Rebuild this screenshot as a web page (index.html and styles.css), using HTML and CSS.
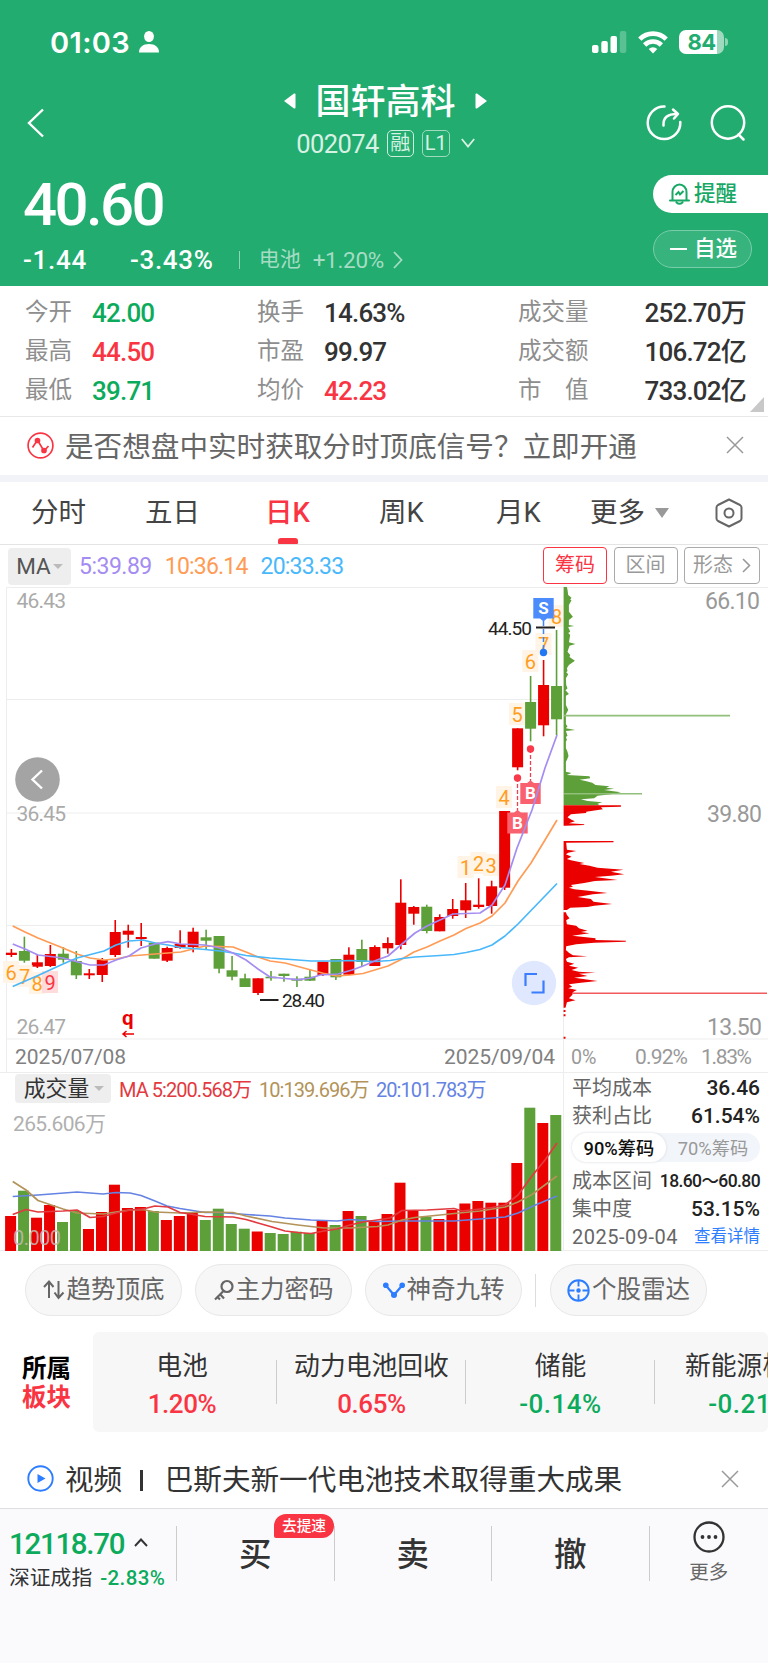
FILE: index.html
```html
<!DOCTYPE html>
<html lang="zh-CN">
<head>
  <meta charset="UTF-8">
  <meta name="viewport" content="width=device-width, initial-scale=1.0">
  <title>国轩高科 002074</title>
  <link rel="stylesheet" href="styles.css">
</head>
<body>
  <header class="header">
    <div class="status-bar">
      <span class="clock">01:03</span>
      <svg class="person" width="20" height="22" viewBox="0 0 20 22" fill="#fff"><ellipse cx="10" cy="5.5" rx="4.9" ry="5.5"/><path d="M0 21.5C0 16 4 13 10 13s10 3 10 8.500z"/></svg>
      <div class="status-icons">
        <svg width="35" height="23" viewBox="0 0 35 23" fill="#fff"><rect x="0" y="14" width="6.500" height="8" rx="2"/><rect x="9.300" y="10" width="6.500" height="12" rx="2"/><rect x="18.500" y="5" width="6.500" height="17" rx="2"/><rect x="27.800" y="0" width="6.500" height="22" rx="2" opacity=".25"/></svg>
        <svg width="30" height="23" viewBox="0 0 30 23" fill="none" stroke="#fff" stroke-width="4.600"><path d="M1.800 8.200a18.500 18.500 0 0 1 26.400 0"/><path d="M6.600 14a12 12 0 0 1 16.800 0"/><path d="M15 22.500l-4.300-4.600a6.300 6.300 0 0 1 8.600 0z" fill="#fff" stroke="none"/></svg>
        <div class="battery"><span>84</span></div>
      </div>
    </div>

    <div class="nav">
      <svg class="back" width="18" height="30" viewBox="0 0 18 30" fill="none" stroke="#fff" stroke-width="2.400"><path d="M16 1.500L2 15l14 13.500"/></svg>
      <div class="nav-title">
        <div class="stock-name">
          <svg width="12" height="16" viewBox="0 0 12 16" fill="#fff"><path d="M0 8L10 .6q1.500-.6 1.500 1v12.800q0 1.600-1.500 1z"/></svg>
          <h1>国轩高科</h1>
          <svg width="12" height="16" viewBox="0 0 12 16" fill="#fff"><path d="M12 8L2 .6Q.5 0 .5 1.600v12.800q0 1.600 1.500 1z"/></svg>
        </div>
        <div class="stock-code">
          <span class="code">002074</span>
          <span class="tag">融</span>
          <span class="tag tag-l1">L1</span>
          <svg width="14" height="10" viewBox="0 0 14 10" fill="none" stroke="#d8f1e5" stroke-width="1.800"><path d="M.8 1L7 8.500 13.200 1"/></svg>
        </div>
      </div>
      <div class="nav-actions">
        <svg width="36" height="36" viewBox="0 0 36 36" fill="none" stroke="#fff" stroke-width="2.500" stroke-linecap="round"><path d="M18.500 1.500A16.300 16.300 0 1 0 34.300 17"/><path d="M17.500 20.500c-.5-8 4-11.500 13.500-11.500"/><path d="M27 4.500l5 4.500-4 4.500" stroke-linejoin="round"/></svg>
        <svg width="36" height="37" viewBox="0 0 36 37" fill="none" stroke="#fff" stroke-width="2.500" stroke-linecap="round"><circle cx="18" cy="17.500" r="16.200"/><path d="M28.500 29.500l5 5"/></svg>
      </div>
    </div>

    <div class="quote">
      <div class="quote-left">
        <div class="price">40.60</div>
        <div class="change">
          <span class="diff">-1.44</span>
          <span class="percent">-3.43%</span>
          <i class="split"></i>
          <span class="sector-name">电池</span>
          <span class="sector-rate">+1.20%</span>
          <svg width="10" height="18" viewBox="0 0 10 18" fill="none" stroke="#a5dcc4" stroke-width="1.800"><path d="M1 1l7.500 8L1 17"/></svg>
        </div>
      </div>
      <div class="quote-right">
        <a class="pill pill-remind">
          <svg width="21" height="22" viewBox="0 0 21 22" fill="none" stroke="#18a866" stroke-width="2"><path d="M3.500 17V9a7 7.500 0 0 1 14 0v8M1 17.500h19M7.500 19.500q3 2.500 6 0" stroke-linecap="round"/><path d="M6.500 12l3-3 1.500 2.500 3.500-3.500"/></svg>
          <span>提醒</span>
        </a>
        <a class="pill pill-fav"><i class="minus"></i><span>自选</span></a>
      </div>
    </div>
  </header>

  <section class="stats">
    <span class="label">今开</span><b class="green">42.00</b>
    <span class="label">换手</span><b>14.63%</b>
    <span class="label">成交量</span><b class="right">252.70万</b>
    <span class="label">最高</span><b class="red">44.50</b>
    <span class="label">市盈</span><b>99.97</b>
    <span class="label">成交额</span><b class="right">106.72亿</b>
    <span class="label">最低</span><b class="green">39.71</b>
    <span class="label">均价</span><b class="red">42.23</b>
    <span class="label">市　值</span><b class="right">733.02亿</b>
    <i class="corner"></i>
  </section>

  <section class="notice">
    <svg width="27" height="27" viewBox="0 0 27 27" fill="none" stroke="#fa3543" stroke-width="1.700"><circle cx="13.500" cy="13.500" r="12.400"/><path d="M5.500 15.500L10.500 8l6.500 11 4.500-5"/><circle cx="10.500" cy="8.500" r="2" fill="#fa3543"/><circle cx="17" cy="18.500" r="2" fill="#fa3543"/></svg>
    <span>是否想盘中实时获取分时顶底信号？立即开通</span>
    <svg class="close" width="18" height="18" viewBox="0 0 18 18" stroke="#999" stroke-width="1.500"><path d="M1 1l16 16M17 1L1 17"/></svg>
  </section>

  <nav class="tabs">
    <a>分时</a>
    <a>五日</a>
    <a class="active">日K</a>
    <a>周K</a>
    <a>月K</a>
    <a class="more">更多<i class="arrow"></i></a>
    <svg width="28" height="30" viewBox="0 0 28 30" fill="none" stroke="#666" stroke-width="2"><path d="M14 1.500L25 7q1.500 1 1.500 2.500v11q0 1.500-1.500 2.500L14 28.500 3 23q-1.500-1-1.500-2.500v-11Q1.500 8 3 7z" stroke-linejoin="round"/><circle cx="14" cy="15" r="4.500"/></svg>
  </nav>

  <div class="ma-row">
    <span class="select">MA<i class="arrow"></i></span>
    <span class="ma purple">5:39.89</span>
    <span class="ma orange">10:36.14</span>
    <span class="ma blue">20:33.33</span>
    <div class="tools">
      <a class="tool on">筹码</a>
      <a class="tool">区间</a>
      <a class="tool tool-wide">形态<svg width="9" height="15" viewBox="0 0 9 15" fill="none" stroke="#999" stroke-width="1.600"><path d="M1 1l6.500 6.500L1 14"/></svg></a>
    </div>
  </div>

  <svg class="k-chart" id="kChart" width="768" height="485" viewBox="0 587 768 485">
    <g class="grid">
      <path d="M6.500 1072V587.500H768M6.500 699.500H563M6.500 813H563M6.500 925.500H563M6.500 1039H768M563.500 1039V1072M563.500 890V1039"/>
    </g>
    <g id="chips"></g>
    <g id="candles"></g>
    <g id="marks"></g>
    <g id="kLines" class="lines"></g>
    <g class="axis">
      <text x="16.500" y="608" textLength="49.500">46.43</text>
      <text x="16.500" y="821" textLength="49.500">36.45</text>
      <text x="16.500" y="1034" textLength="49.500">26.47</text>
    </g>
    <g class="axis axis-right">
      <text x="705" y="609" textLength="55">66.10</text>
      <text x="707" y="822" textLength="55">39.80</text>
      <text x="707" y="1035" textLength="55">13.50</text>
    </g>
    <g class="axis axis-date">
      <text x="15" y="1064" textLength="111">2025/07/08</text>
      <text x="444" y="1064" textLength="111">2025/09/04</text>
    </g>
    <g class="axis axis-percent">
      <text x="571" y="1064" textLength="25.500" lengthAdjust="spacingAndGlyphs">0%</text>
      <text x="635" y="1064" textLength="53">0.92%</text>
      <text x="701" y="1064" textLength="51">1.83%</text>
    </g>
    <g class="extreme">
      <text x="488" y="634.500" textLength="44">44.50</text>
      <path d="M536 627.500h19M260 1000h18.500"/>
      <text x="282" y="1007" textLength="43">28.40</text>
    </g>
    <text class="dividend" x="122" y="1025">q</text>
    <path class="dividend-arrow" d="M134 1034h-11M126.500 1031l-3.500 3 3.500 3"/>
    <circle cx="37.500" cy="779.500" r="22.300" fill="#a4a4a4"/>
    <path d="M42 770.500l-9.500 9 9.500 9" fill="none" stroke="#fff" stroke-width="2.400"/>
    <circle cx="534" cy="983" r="22.200" fill="#dfe8fe"/>
    <path d="M525.500 986v-12H537M543.500 980.500v12H531.500" fill="none" stroke="#3a7dff" stroke-width="2.200"/>
  </svg>

  <section class="volume">
    <div class="volume-left">
      <div class="volume-head">
        <span class="select select-vol">成交量<i class="arrow"></i></span>
        <span class="vma vma-red">MA 5:200.568万</span>
        <span class="vma vma-brown">10:139.696万</span>
        <span class="vma vma-blue">20:101.783万</span>
      </div>
      <svg class="v-chart" width="563" height="145" viewBox="0 1106 563 145">
        <g id="volumes"></g>
        <g id="vLines" class="lines"></g>
        <text class="axis-vol" x="13" y="1131" textLength="93">265.606万</text>
        <text class="axis-zero" x="13" y="1244.500" textLength="48">0.000</text>
      </svg>
    </div>
    <div class="volume-right">
      <div class="row"><span>平均成本</span><b>36.46</b></div>
      <div class="row"><span>获利占比</span><b>61.54%</b></div>
      <div class="toggle"><a class="on">90%筹码</a><a>70%筹码</a></div>
      <div class="row row-small"><span>成本区间</span><b>18.60～60.80</b></div>
      <div class="row"><span>集中度</span><b>53.15%</b></div>
      <div class="row row-date"><span>2025-09-04</span><a>查看详情</a></div>
    </div>
  </section>

  <section class="features">
    <a>
      <svg width="22" height="22" viewBox="0 0 22 22" fill="none" stroke="#666" stroke-width="2"><path d="M6 19V3M1 8l5-5.500L10.500 8M15.500 2v17M11.500 13.500l4 5.500 5-5.500"/></svg>
      趋势顶底
    </a>
    <a>
      <svg width="20" height="22" viewBox="0 0 20 22" fill="none" stroke="#666" stroke-width="2.200"><circle cx="13" cy="7.500" r="5.500"/><path d="M9.500 12L1 20.500M5.500 14.500l4.500 5M3 17.500l3 3"/></svg>
      主力密码
    </a>
    <a>
      <svg width="22" height="22" viewBox="0 0 22 22" fill="none" stroke="#2c7dff" stroke-width="2.200"><path d="M2.500 6L11 16l8.500-10"/><g fill="#2c7dff" stroke="none"><circle cx="2.800" cy="6.300" r="2.800"/><circle cx="19.200" cy="6.300" r="2.800"/><circle cx="11" cy="16" r="3"/></g></svg>
      神奇九转
    </a>
    <i class="bar"></i>
    <a>
      <svg width="23" height="23" viewBox="0 0 23 23" fill="none" stroke="#2c7dff" stroke-width="1.900"><circle cx="11.500" cy="11.500" r="10.200"/><path d="M11.500 1v6.500M11.500 15.500V22M1 11.500h6.500M15.500 11.500H22"/><circle cx="11.500" cy="11.500" r="1.300" fill="#2c7dff"/></svg>
      个股雷达
    </a>
  </section>

  <section class="sectors">
    <div class="sectors-title"><span>所属</span><span class="red">板块</span></div>
    <div class="sectors-list">
      <div class="sector"><span>电池</span><b class="red">1.20%</b></div>
      <div class="sector"><span>动力电池回收</span><b class="red">0.65%</b></div>
      <div class="sector"><span>储能</span><b class="green">-0.14%</b></div>
      <div class="sector"><span>新能源板块</span><b class="green">-0.21%</b></div>
    </div>
  </section>

  <section class="video">
    <svg width="27" height="27" viewBox="0 0 27 27" fill="none" stroke="#2c7dff" stroke-width="1.900"><circle cx="13.500" cy="13.500" r="12.200"/><path d="M10.500 9v9l8-4.500z" fill="#2c7dff" stroke="none"/></svg>
    <span>视频</span>
    <i class="video-bar"></i>
    <span>巴斯夫新一代电池技术取得重大成果</span>
    <svg class="close" width="18" height="18" viewBox="0 0 18 18" stroke="#999" stroke-width="1.500"><path d="M1 1l16 16M17 1L1 17"/></svg>
  </section>

  <footer class="footer">
    <div class="index">
      <div class="index-value">12118.70<svg width="14" height="9" viewBox="0 0 14 9" fill="none" stroke="#333" stroke-width="1.900"><path d="M1 8l6-6.500L13 8"/></svg></div>
      <div class="index-name">深证成指<span>-2.83%</span></div>
    </div>
    <a class="trade">买<em>去提速</em></a>
    <a class="trade">卖</a>
    <a class="trade">撤</a>
    <a class="footer-more">
      <svg width="32" height="32" viewBox="0 0 32 32" fill="none" stroke="#333" stroke-width="2.300"><circle cx="16" cy="16" r="14.500"/><g fill="#333" stroke="none"><circle cx="9.500" cy="16" r="1.900"/><circle cx="16" cy="16" r="1.900"/><circle cx="22.500" cy="16" r="1.900"/></g></svg>
      <span>更多</span>
    </a>
  </footer>

  <script src="script.js"></script>
</body>
</html>
```

FILE: styles.css
```css
* { box-sizing: border-box; margin: 0; padding: 0; }
body { width: 768px; height: 1663px; overflow: hidden; background: #fff; color: #333; font-family: Roboto, "Noto Sans CJK SC", sans-serif; }
svg { display: block; flex: none; }
i, em { font-style: normal; display: block; }
b { font-weight: 500; }
.red { color: #fa3543 !important; }
.green { color: #0cab5c !important; }
.arrow { width: 0; height: 0; border-left: 5px solid transparent; border-right: 5px solid transparent; border-top: 5px solid #999; }

/* header */
.header { height: 286px; background: #22ac6f; color: #fff; }
.status-bar { height: 84px; padding: 0 44px 0 50px; display: flex; align-items: center; }
.clock { font-family: Inter, sans-serif; font-weight: 600; font-size: 29px; letter-spacing: .4px; line-height: 1; }
.person { margin-left: 9px; }
.status-icons { margin-left: auto; display: flex; align-items: center; gap: 11px; }
.battery { position: relative; width: 45px; height: 24px; border-radius: 7px; background: linear-gradient(90deg, #fff 84%, #9fdabf 84%); color: #22ac6f; font: 700 22px/24px Inter, sans-serif; letter-spacing: -.5px; text-align: center; }
.battery::after { content: ""; position: absolute; left: 46px; top: 8px; width: 3px; height: 8px; border-radius: 0 3px 3px 0; background: #8dd3b4; }
.nav { height: 76px; padding: 0 22px 0 27px; display: grid; grid-template-columns: 96px 1fr 98px; }
.back { margin-top: 24px; }
.nav-title { display: flex; flex-direction: column; align-items: center; }
.stock-name { display: flex; align-items: center; gap: 19px; height: 34px; }
.stock-name h1 { padding-top: 3px; font-size: 35px; font-weight: 500; line-height: 34px; }
.stock-code { display: flex; align-items: center; gap: 8px; height: 28px; margin-top: 11px; color: #d8f1e5; }
.code { padding-top: 2px; font-size: 25.500px; letter-spacing: -.6px; }
.tag { width: 27px; height: 27px; border: 1.500px solid #d0eee0; border-radius: 5px; font-size: 20px; line-height: 24px; text-align: center; }
.tag-l1 { width: 28px; font-size: 20px; border-color: #9fdabf; }
.stock-code svg { margin-left: 3px; }
.nav-actions { display: flex; gap: 28px; margin-top: 21px; justify-content: flex-end; }
.quote { display: flex; justify-content: space-between; padding-left: 23px; }
.price { margin-top: 15px; font-size: 60px; font-weight: 500; line-height: 60px; letter-spacing: -2.600px; }
.change { display: flex; align-items: center; height: 28px; margin-top: 11px; font-size: 26px; letter-spacing: -.3px; }
.diff, .percent { font-weight: 500; letter-spacing: .7px; }
.percent { margin-left: 43px; }
.split { width: 1px; height: 18px; margin-left: 25px; background: #90d5b7; }
.sector-name { margin-left: 19px; font-size: 21px; line-height: 26px; padding-bottom: 2px; color: #a5dcc4; letter-spacing: 0; }
.sector-rate { margin: 0 9px 0 12px; font-size: 22.500px; color: #a5dcc4; }
.quote-right { width: 115px; padding-top: 15px; }
.pill { display: flex; align-items: center; height: 38px; padding-left: 16px; border-radius: 19px; font-size: 21.500px; font-weight: 500; line-height: 38px; }
.pill-remind { background: #fff; color: #18a866; border-radius: 19px 0 0 19px; gap: 4px; }
.pill-fav { width: 99px; margin-top: 17px; border: 1.500px solid #7accaa; background: #37b47d; gap: 7px; }
.minus { width: 17px; height: 2px; background: #fff; }

/* stats */
.stats { position: relative; height: 131px; padding: 7px 22px 0 25px; display: grid; grid-template-columns: 67px 165px 67px 194px 101px 1fr; grid-auto-rows: 39px; line-height: 39px; border-bottom: 1px solid #e8e8e8; }
.stats .label { font-size: 23.500px; color: #8e8e8e; }
.stats b { font-size: 26px; letter-spacing: -.8px; line-height: 40px; }
.stats .right { text-align: right; white-space: nowrap; }
.corner { position: absolute; right: 4px; bottom: 4px; border-left: 14px solid transparent; border-bottom: 15px solid #c8c8c8; }

.notice { height: 65px; padding: 0 24px 0 27px; display: flex; align-items: center; gap: 11px; font-size: 28.600px; line-height: 58px; color: #666; border-bottom: 7px solid #f2f3f9; }
.notice span { padding-top: 2px; }
.notice svg { margin-top: -2px; }
.close { margin-left: auto; }

/* period tabs */
.tabs { height: 63px; padding: 0 25px 0 31px; display: grid; grid-template-columns: 114px 120px 114px 117px 94px 1fr 28px; align-items: center; border-bottom: 1px solid #e4e4e4; font-size: 27.500px; line-height: 62px; color: #444; }
.tabs a { position: relative; }
.tabs .active { color: #fa3543; font-weight: 500; }
.tabs .active::after { content: ""; position: absolute; left: 13px; bottom: 0; width: 20px; height: 6px; border-radius: 3px 3px 1px 1px; background: #fa3543; }
.more { display: flex; align-items: center; gap: 10px; }
.more .arrow { border-width: 10px 7px 0; }

.ma-row { height: 42px; padding: 0 8px; display: flex; align-items: center; }
.select { display: flex; align-items: center; justify-content: center; gap: 2px; width: 63px; height: 37px; border-radius: 4px; background: #eee; color: #555; font-size: 22.500px; }
.select .arrow { border-top-color: #bbb; }
.ma { font-size: 23px; letter-spacing: -.8px; margin-left: 13px; }
.ma:nth-child(2) { margin-left: 8px; letter-spacing: -.5px; }
.purple { color: #a48cf2; }
.orange { color: #ff9b55; }
.blue { color: #49b8fb; }
.tools { margin: -2px 0 0 auto; display: flex; gap: 6.500px; }
.tool { display: flex; align-items: center; justify-content: center; gap: 9px; width: 64px; height: 37px; border: 1.500px solid #aaa; border-radius: 4px; color: #999; font-size: 20px; line-height: 34px; }
.tool-wide { width: 76px; }
.tool.on { color: #fa3543; border-color: #fa3543; }

/* candles */
.grid path { fill: none; stroke: #ededed; stroke-width: 1; }
.axis { font-size: 21px; fill: #aaa; }
.axis-right { font-size: 23px; fill: #999; }
.axis-date { font-size: 21px; fill: #808080; }
.axis-percent { font-size: 21px; fill: #999; }
.lines path { fill: none; stroke-width: 1.700; stroke-linejoin: round; }
.extreme { font-size: 19px; fill: #222; }
.extreme path { stroke: #222; stroke-width: 2; }
.nine { font-size: 20px; text-anchor: middle; fill: #ff9d1e; }
.nine-end { fill: #fa3543; }
.badge-text { font-size: 17px; font-weight: 700; text-anchor: middle; fill: #fff; }
.dividend { font-size: 20.500px; font-weight: 700; fill: #eb0000; }
.dividend-arrow { fill: none; stroke: #eb0000; stroke-width: 1.500; }

/* volume */
.volume { height: 179px; display: flex; border-top: 1px solid #ededed; border-bottom: 1px solid #ededed; }
.volume-left { width: 563px; }
.volume-head { display: flex; align-items: center; height: 33px; padding-left: 15px; white-space: nowrap; }
.select-vol { width: 96px; height: 29px; gap: 5px; margin: -2px 8px 0 0; padding-left: 2px; color: #333; font-size: 21.800px; line-height: 29px; }
.vma { width: 140px; font-size: 20px; line-height: 38px; letter-spacing: -.95px; }
.vma-brown { width: 117px; }
.vma-red { color: #e23a3f; }
.vma-brown { color: #b39359; }
.vma-blue { width: 110px; color: #6583e2; }
.axis-vol { font-size: 21px; fill: #b0b0b0; }
.axis-zero { font-size: 20px; fill: #c4b9b5; opacity: .85; }
.volume-right { flex: 1; padding: 1px 8px 0 8px; border-left: 1px solid #ededed; }
.row { display: flex; justify-content: space-between; align-items: center; height: 28px; font-size: 20px; line-height: 28px; color: #666; white-space: nowrap; }
.row b { color: #222; font-size: 21px; }
.row-small { margin-top: 5px; }
.row-small b { font-size: 17.500px; letter-spacing: -.6px; }
.toggle { display: flex; height: 29px; margin-top: 3px; border-radius: 15px; background: #f2f5fa; color: #999; font-size: 18.300px; line-height: 31px; text-align: center; }
.toggle a { flex: 1; }
.toggle .on { border-radius: 15px; background: #fff; color: #111; font-weight: 500; box-shadow: 0 0 3px #d4d8de; }
.row-date { font-size: 20px; letter-spacing: .5px; }
.row-date a { font-size: 16.500px; letter-spacing: 0; color: #2c7dff; }

/* feature buttons */
.features { display: flex; gap: 13px; padding: 13px 25px 0; }
.features a { display: flex; align-items: center; justify-content: center; gap: 2px; width: 157px; height: 52px; border: 1px solid #e8e8e8; border-radius: 26px; background: #f7f7f7; color: #666; font-size: 24.500px; line-height: 50px; }
.bar { width: 1px; height: 33px; margin: 10px 1px 0 0; background: #ddd; }

/* sectors */
.sectors { display: flex; height: 100px; margin-top: 16px; }
.sectors-title { width: 93px; padding: 22px 0 0 22px; display: flex; flex-direction: column; font-size: 24.500px; font-weight: 700; line-height: 29px; color: #000; }
.sectors-list { width: 675px; display: flex; border-radius: 6px; background: #f7f7f8; overflow: hidden; }
.sector { position: relative; flex: none; width: 189px; padding-top: 15px; text-align: center; }
.sector:first-child { width: 184px; padding-right: 6px; }
.sector::after { content: ""; position: absolute; right: 0; top: 28px; width: 1px; height: 44px; background: #ccc; }
.sector span, .sector b { display: block; height: 38px; line-height: 38px; font-size: 25.800px; }
.sector b { font-size: 26px; letter-spacing: -.4px; }
.sector .green { letter-spacing: .5px; }

.video { height: 76px; padding: 20px 29px 0 27px; display: flex; align-items: center; font-size: 28.600px; line-height: 52px; }
.video svg { margin-top: -3px; }
.video svg + span { margin-left: 11px; }
.video-bar { width: 2.500px; height: 21px; margin: 0 22px 0 18px; background: #333; }

/* footer */
.footer { height: 155px; padding-right: 0; display: flex; border-top: 1px solid #dddde2; background: #fafafd; }
.index { width: 177px; height: 55px; margin-top: 17px; padding-left: 9px; border-right: 1px solid #ccc; white-space: nowrap; }
.index-value { display: flex; align-items: center; gap: 10px; padding-top: 2px; font-size: 29.500px; line-height: 32px; letter-spacing: -1.300px; font-weight: 500; color: #0cab5c; }
.index-value svg { margin-top: -3px; }
.index-name { margin-top: 4px; font-size: 20.800px; line-height: 28px; }
.index-name span { margin-left: 8px; font-size: 20.500px; letter-spacing: .4px; color: #0cab5c; font-weight: 500; }
.trade { position: relative; width: 157.500px; height: 55px; margin-top: 17px; border-right: 1px solid #ccc; font-size: 32.500px; font-weight: 500; line-height: 58px; text-align: center; }
.trade em { position: absolute; left: 97px; top: -12px; width: 60px; height: 24px; border-radius: 12px 12px 12px 2px; background: #fa3543; color: #fff; font-size: 14.700px; line-height: 24px; }
.footer-more { flex: 1; display: flex; flex-direction: column; align-items: center; padding-top: 12px; font-size: 19.500px; line-height: 36px; color: #666; }
.footer-more span { margin-top: 2px; }
```

FILE: script.js
```js
const RED = '#eb0000';
const GREEN = '#5d9f39';
const NS = 'http://www.w3.org/2000/svg';

function add(parent, tag, attrs, text) {
  const el = document.createElementNS(NS, tag);
  for (const key in attrs) el.setAttribute(key, attrs[key]);
  if (text) el.textContent = text;
  document.getElementById(parent).appendChild(el);
}

// [color, high, body top, body bottom, low]
const candles = [
  ['r', 949, 952.7, 955, 957], ['g', 936.7, 951, 960.7, 962.7], ['r', 954.7, 962.3, 966.7, 968],
  ['r', 945, 954, 966, 967], ['g', 947, 953.7, 959.7, 962.7], ['g', 951, 961, 975.3, 979],
  ['r', 969, 973.3, 975.3, 979], ['r', 958, 960, 975, 982], ['r', 920, 932, 955, 957],
  ['r', 924.7, 930.7, 934.7, 947.7], ['r', 923, 937, 939, 946], ['g', 942, 942.7, 958.7, 958.7],
  ['r', 946.7, 948, 960.7, 962], ['r', 930.3, 944, 948, 948.7], ['r', 927.7, 931.7, 947, 952.3],
  ['g', 929.7, 937.3, 940.7, 949.3], ['g', 936, 936, 968.7, 973.3], ['g', 956, 970.3, 976.7, 980.3],
  ['g', 973.7, 978.3, 987, 987], ['r', 978.3, 978.3, 993, 995], ['g', 971, 976.7, 978.3, 980.7],
  ['g', 973.7, 973.7, 976, 981.7], ['g', 976.3, 978.7, 980.7, 987], ['g', 969, 976.7, 980.7, 981],
  ['r', 961.7, 961.7, 975, 976], ['g', 959, 959, 977.3, 980], ['r', 947.3, 954.7, 974.7, 974.7],
  ['g', 939.7, 949, 962, 966.7], ['r', 945.3, 947, 966, 966], ['r', 937.3, 943, 948.3, 953.7],
  ['r', 879.3, 902.7, 945, 949.3], ['r', 906, 907, 913.7, 924.7], ['g', 904.7, 906.7, 931, 933.3],
  ['r', 914.3, 917, 931.3, 931.3], ['r', 899, 909, 916, 918.7], ['r', 883, 900.3, 910.3, 918],
  ['r', 878.3, 904.7, 907, 908.7], ['r', 880.7, 886.3, 906, 913.7], ['r', 811, 811, 887.7, 890],
  ['r', 728.3, 728.3, 767.3, 770.3], ['g', 676, 702, 728.7, 741.3], ['r', 660, 685, 725.3, 736.3],
  ['g', 630, 686, 719.3, 735]
];
candles.forEach(([c, high, top, bottom, low], i) => {
  const x = 11.4 + i * 12.98;
  const fill = c === 'r' ? RED : GREEN;
  add('candles', 'rect', { x: x - 0.8, y: high, width: 1.6, height: low - high, fill });
  add('candles', 'rect', { x: x - 5.5, y: top, width: 11, height: bottom - top, fill });
});

// volume bar tops
const volumes = [1216, 1190.7, 1217.7, 1205, 1222, 1211, 1229, 1212, 1184.7, 1208, 1207, 1211, 1220, 1216, 1212,
  1220, 1208.7, 1224, 1228.7, 1231.5, 1233, 1234, 1231.7, 1233, 1220, 1225, 1211, 1216, 1221, 1214, 1182.7,
  1211, 1216.7, 1219, 1210, 1203.5, 1201, 1202.7, 1202.7, 1163, 1107.7, 1123, 1115];
volumes.forEach((y, i) => {
  const fill = candles[i][0] === 'r' ? RED : GREEN;
  add('volumes', 'rect', { x: 5.1 + i * 12.98, y, width: 11, height: 1251 - y, fill });
});

function line(parent, stroke, points) {
  add(parent, 'path', { d: 'M' + points, stroke });
}
line('kLines', '#ff9b55', '12.7,926 25,932 38,938 63,948 77,954 90,958 104,960 116,959 130,956 155,954 181,952 205,946 233,947 246,952 258,957 270,961 285,963 298,966.5 311,970 325,973.7 337,976 350,975 363,973.5 388,966 402,959 414,952 427,947 440,941 454,935 466,928.5 480,923 492,916 505,903 518,881 531,863 545,840 557,820');
line('kLines', '#49b8fb', '12.7,986.5 38,975.5 63,964 77,958 104,951 116,945 129,941 143,940 155,943 168,945 181,947.5 205,949.5 220,951 233,953 246,955.5 270,958 298,960 311,961 337,961 350,960.5 363,961 376,961.5 390,960.5 402,958.5 415,957 440,955.5 454,954.5 466,952.5 480,949.5 492,945 505,936 518,924 531,910.5 545,896 557,883.5');
line('kLines', '#a48cf2', '12.7,944 25,949 38,955 63,958 77,961.7 90,965 104,965 116,960 129,956 141,948 155,944 168,941.7 181,944 205,945 220,948 233,953 246,960 258,969 270,977 285,978.5 298,979.7 311,978 320,975 338,974 352,970 363,966 377,960 388,956 402,944 415,933 427,926 440,920 453,914 480,913 492,905 505,885 517,848 532,810 545,768 557,735');
line('vLines', '#6583e2', '12.7,1196.5 38,1195 77,1192 103,1194 116,1192.5 130,1193 141,1195.5 155,1201 167,1206 180,1208.5 205,1212.5 220,1212.5 246,1214.5 270,1216 285,1218 311,1220 337,1221 350,1219.5 377,1221.5 402,1221 454,1221 480,1219 505,1217 518,1213 532,1206.5 545,1201 557,1196');
line('vLines', '#b39359', '12.7,1181.5 26,1190 38,1200.5 63,1209 77,1213 103,1214 116,1212 130,1210 143,1209.5 155,1212 180,1213 205,1212 233,1212.5 246,1216 272,1221.5 298,1225 324,1228 350,1228 377,1226.5 388,1225 402,1220 415,1217.5 440,1215 454,1213.5 480,1211 505,1207 518,1202 532,1194.5 557,1176');
line('vLines', '#e23a3f', '12.7,1214.5 26,1209.5 38,1212 63,1211 77,1210 90,1217.5 103,1216.5 116,1213 130,1210 143,1209 155,1206 168,1207 180,1212.5 205,1216.5 233,1217 246,1219.5 258,1223 272,1227 285,1231 298,1232.5 311,1233.5 324,1231 337,1229 350,1225 363,1222 377,1220 390,1218 402,1210.5 427,1210 454,1208.5 462,1211 480,1209 492,1207.5 505,1205 518,1195 532,1176 545,1160 557,1143');

// chip distribution, [offset, length] in thirds of a pixel
const chipsUp = [[6, 8], [14, 10], [30, 12], [38, 22], [44, 18], [46, 22], [60, 14], [80, 14], [90, 22], [95, 26], [105, 14], [120, 14], [123, 30], [126, 12],
  [140, 18], [144, 12], [150, 18], [172, 14], [177, 34], [182, 16], [200, 10], [210, 18], [216, 16], [227, 32], [240, 14], [250, 8],
  [258, 10], [262, 6], [268, 12], [280, 5], [300, 6], [310, 10], [316, 4], [327, 14], [332, 5], [360, 5], [370, 10], [375, 12], [388, 5],
  [418, 5], [424, 10], [430, 5], [435, 33], [438, 5], [452, 10], [456, 5], [464, 8], [470, 5], [490, 5], [500, 10], [513, 13], [525, 8], [530, 5],
  [560, 5], [564, 22], [570, 8], [574, 76], [580, 78], [584, 46], [588, 64], [593, 84], [600, 94], [604, 136], [608, 126], [611, 150], [615, 120],
  [622, 170], [628, 140], [632, 100], [640, 90], [643, 50], [648, 70], [652, 114], [656, 100], [661, 106]];
const chipsDown = [
  [[661, 170], [665, 170], [667, 110], [673, 116], [680, 66], [684, 66], [688, 20], [697, 10], [704, 22], [709, 32], [715, 14], [718, 60], [720, 60], [722, 5]],
  [[768, 148], [772, 148], [773, 6], [794, 8], [798, 36], [803, 12], [808, 5], [815, 22], [822, 8], [826, 20], [834, 60], [837, 46], [842, 76], [848, 100], [854, 178], [860, 140], [868, 180], [872, 140], [876, 92], [885, 160], [888, 92], [894, 60], [900, 20], [905, 26], [908, 14], [913, 30], [918, 80], [924, 130], [928, 86], [936, 40], [942, 80], [950, 88], [957, 144], [962, 90], [966, 70], [968, 18], [975, 8]],
  [[982, 5], [990, 8], [1000, 16], [1006, 6], [1018, 8], [1022, 36], [1030, 44], [1037, 70], [1041, 50], [1045, 76], [1052, 24], [1060, 94], [1065, 94], [1067, 186], [1070, 184], [1073, 90], [1078, 36], [1084, 6], [1095, 5], [1103, 14], [1111, 26], [1114, 70], [1117, 14], [1122, 5], [1130, 8], [1136, 30], [1142, 14], [1148, 42], [1155, 22], [1160, 44], [1163, 94], [1166, 44], [1173, 70], [1178, 30], [1188, 100], [1193, 50], [1198, 14], [1205, 24], [1210, 12], [1215, 38], [1220, 28], [1230, 24], [1240, 14], [1246, 34], [1252, 8], [1268, 4]],
  [[1275, 4], [1281, 4]], [[1288, 4], [1294, 4]], [[1355, 4], [1361, 4]]
];
function silhouette(rows, fill) {
  const px = rows.map(([y, len]) => (564.2 + len / 3).toFixed(1) + ',' + (585 + y / 3).toFixed(1));
  const first = 585 + rows[0][0] / 3;
  const last = 585 + rows[rows.length - 1][0] / 3;
  add('chips', 'path', { d: `M563.6,${first} L${px.join(' ')} L563.6,${last}z`, fill });
}
silhouette(chipsUp, GREEN);
chipsDown.forEach(rows => silhouette(rows, RED));
add('chips', 'path', { d: 'M564 715.6H730M564 793.7H642', stroke: '#92bf7b', 'stroke-width': 1.6 });
add('chips', 'path', { d: 'M572 993.3H767', stroke: '#f35a5e', 'stroke-width': 1.6 });

// magic nine counters, [digit, x, y]
[[6, 11, 973], [7, 24.5, 977], [8, 37, 984], [9, 50, 983], [1, 465.5, 868], [2, 478.5, 864], [3, 491, 866],
  [4, 504, 798], [5, 517, 715], [6, 530.3, 662], [7, 543.5, 645], [8, 556.5, 617]].forEach(([n, x, y]) => {
  const right = n === 8 && x > 500 ? 563 : x + 8;
  add('marks', 'rect', { x: x - 8, y: y - 12, width: right - x + 8, height: 22, fill: n === 9 ? '#ffdcdc' : '#fff4e6' });
  add('marks', 'text', { x, y: y + 7, class: n === 9 ? 'nine nine-end' : 'nine' }, n);
});

// buy and sell marks
add('marks', 'path', { d: 'M543.500 621V650', stroke: '#3f85fb', 'stroke-width': 1.500, 'stroke-dasharray': '5 3' });
add('marks', 'circle', { cx: 543.5, cy: 652.5, r: 3.7, fill: '#2277f5' });
add('marks', 'path', { d: 'M533.300 598h20.400v20.500h-6.700l-3.500 3-3.500-3h-6.700z', fill: '#4b8bfb' });
add('marks', 'text', { x: 543.5, y: 614, class: 'badge-text' }, 'S');
[[530.5, 749, 783], [517.5, 778, 812.5]].forEach(([x, dot, top]) => {
  add('marks', 'path', { d: `M${x} ${dot}V${top}`, stroke: '#f0404f', 'stroke-width': 1.3, 'stroke-dasharray': '4 2' });
  add('marks', 'circle', { cx: x, cy: dot, r: 3.7, fill: '#f83a4a' });
  add('marks', 'path', { d: `M${x - 10.2} ${top}h6.700l3.500-2.500 3.500 2.500h6.700v21h-20.400z`, fill: '#f8616d' });
  add('marks', 'text', { x, y: top + 16, class: 'badge-text' }, 'B');
});
```
